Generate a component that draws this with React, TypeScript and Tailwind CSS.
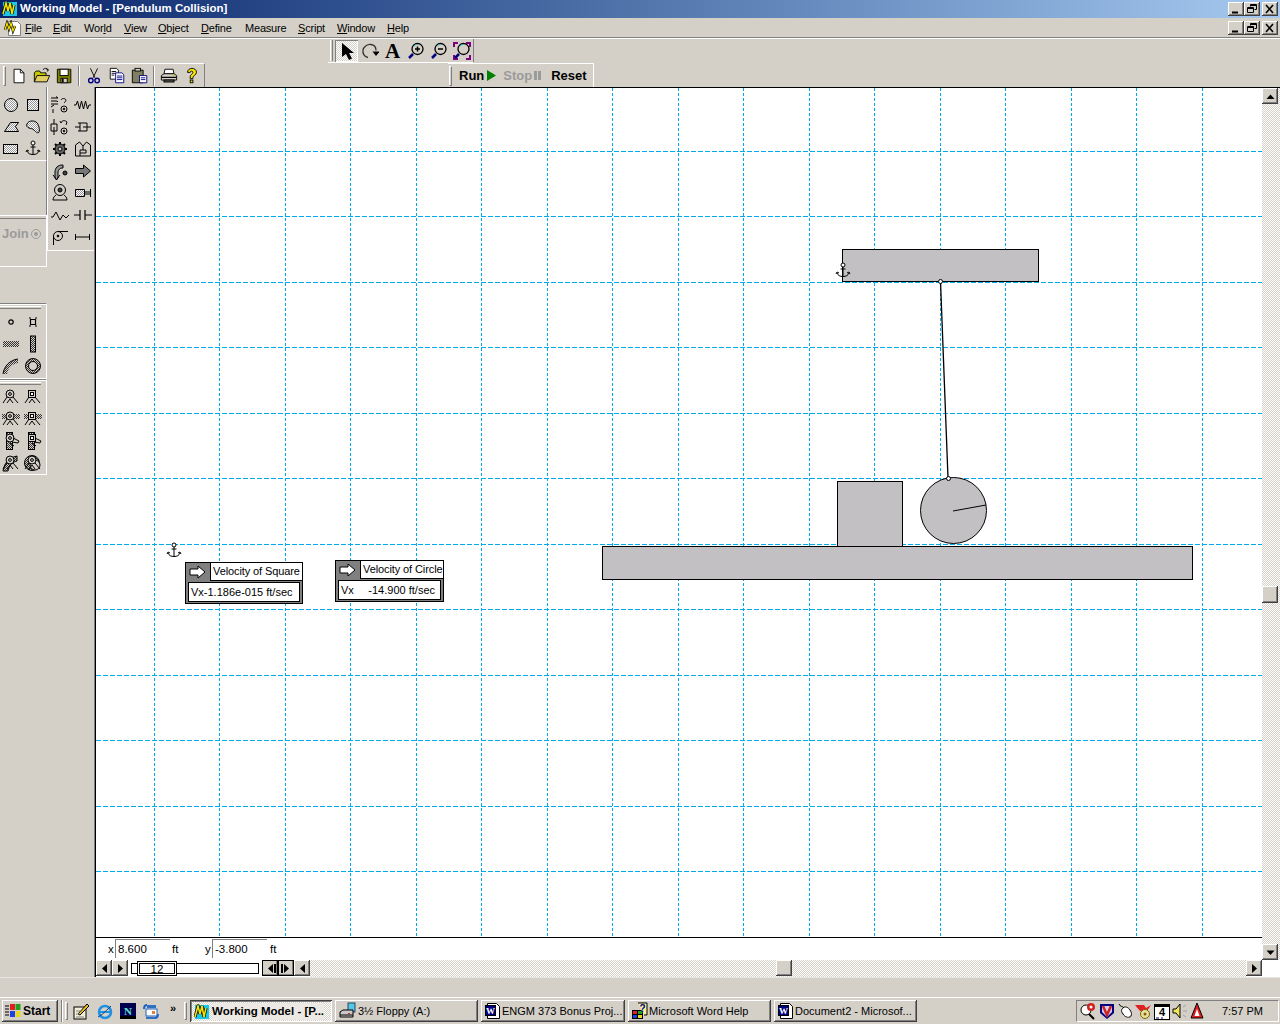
import type { ReactNode } from 'react';

const raised = 'bg-[#d4d0c8] shadow-[inset_-1px_-1px_#404040,inset_1px_1px_#fff,inset_-2px_-2px_#808080,inset_2px_2px_#d4d0c8]';
const stipple = 'bg-[repeating-conic-gradient(#d4d0c8_0_25%,#fff_0_50%)] bg-[length:2px_2px]';
const ST = 'url(#st)';
const ST2 = 'url(#st2)';

const Ico = ({ children, size = 20 }: { children: ReactNode; size?: number }) => (
    <svg width={size} height={size} viewBox="0 0 20 20" fill="none" stroke="#000" strokeWidth="1" className="block">
        {children}
    </svg>
);

const AnchorShape = () => (
    <>
        <circle cx="10" cy="4" r="2" fill="#fff" />
        <path d="M10 6v9M7.500 8h5M4 12c1 2.500 3 3.500 6 3.500s5-1 6-3.500M3 13l1-2 2 1M17 13l-1-2-2 1" />
    </>
);

// simulation toolbar icons
const icons = {
    circle: <circle cx="10" cy="10" r="6.500" fill={ST} />,
    square: <rect x="4.500" y="4.500" width="11" height="11" fill={ST} />,
    poly: <path d="M3.500 14.500 9.500 5.500h8l-3 4 3 5z" fill={ST} />,
    blob: <path d="M4 7c1-3 6-4 9-2s4 8 3 10-3 0-5-2-3-1-5-2-3-2-2-4z" fill={ST} />,
    rect: <rect x="2.500" y="5.500" width="14" height="9" fill={ST} />,
    anchor: <AnchorShape />,
    rotSpring: (
        <>
            <path d="M1 3h7l-2-1.500M1 6h6M1 9h7M1 12l3-2M3 14v4M7 6l1 1" />
            <path d="M11 5c1-2 4-2 5 0 0 1-1 2-2 3" />
            <circle cx="14" cy="14" r="3" />
            <circle cx="14" cy="14" r=".8" fill="#000" />
        </>
    ),
    spring: <path d="M1 10h2l1.500-4 2 8 2-8 2 8 2-8 2 8 1.500-4h2" />,
    rotDamper: (
        <>
            <path d="M4 2v5M1 7h6M1 7v7h6V7M4 10v8" />
            <path d="M11 6c1-3 4-3 6-1l-1 3M11 6l-1-2" />
            <circle cx="14" cy="14" r="3" />
            <circle cx="14" cy="14" r=".8" fill="#000" />
        </>
    ),
    damper: <path d="M2 10h5M7 6v8M5 6h9v8H5M10 10h8" />,
    gear: (
        <>
            <path d="M10 3v14M3 10h14M5 5l10 10M15 5 5 15" strokeWidth="2" />
            <circle cx="10" cy="10" r="5" fill="#666" stroke="#000" />
            <circle cx="10" cy="10" r="2" fill="#d4d0c8" />
        </>
    ),
    house: <path d="M2.500 17V6l4-3 3.500 4 3.500-4 4 3v11H7v-6h6v3H7M2.500 17H7M10 11V7" />,
    curved: (
        <>
            <path d="M5 17V11c0-4 3-7 7-7h1v3h-1c-2 0-4 2-4 4v6l-1.500 2z" fill="#999" />
            <path d="M3 14l3.500 4.500 3.500-4.500" />
            <circle cx="15" cy="12" r="2" fill="#444" />
        </>
    ),
    arrow: <path d="M2.500 7.500h8V4l7 6-7 6v-3.500h-8z" fill="#777" />,
    motor: (
        <>
            <circle cx="10" cy="7" r="5.500" />
            <circle cx="10" cy="7" r="2" fill="#444" />
            <path d="M6 12c-1 1-3 2-3 5h14c0-3-2-4-3-5" />
        </>
    ),
    actuator: <path d="M2.500 6.500h9v7h-9zM11.500 9h6M11.500 11h6M17.500 6v8" fill={ST} />,
    wave: <path d="M1 12h2l3-5 4 8 3-5 3 3 3-3" />,
    plates: <path d="M1 10h6M7 5v10M12 5v10M12 10h7" strokeWidth="1.200" />,
    pulley: (
        <>
            <circle cx="8" cy="9" r="4.500" />
            <circle cx="8" cy="9" r=".9" fill="#000" />
            <path d="M8 4.500h10M3.500 9v9" />
        </>
    ),
    rod: <path d="M2.500 7v6M2.500 10h14M16.500 7v6" />,
    point: <circle cx="10" cy="10" r="2.200" strokeWidth="1.200" />,
    pointSq: <path d="M7.500 7.500h5v5h-5zM6 6h2M12 6h2M6 14h2M12 14h2" strokeWidth="1.200" />,
    hBar: <rect x="2" y="7" width="16" height="6" fill={ST2} stroke="none" />,
    vBar: <rect x="7.500" y="2" width="5" height="16" fill={ST2} />,
    arc: (
        <>
            <path d="M2 18C3 10 9 4 17 3v4C11 8 7 12 6 18z" fill={ST2} stroke="none" />
            <path d="M2 18C3 10 9 4 17 3" />
        </>
    ),
    ring: (
        <>
            <circle cx="10" cy="10" r="7.500" fill={ST2} />
            <circle cx="10" cy="10" r="4.500" fill="#d4d0c8" />
        </>
    ),
};

// joint glyphs used in the bottom two toolbar groups
const Joint = ({ sq, band }: { sq?: boolean; band?: 'h' | 'v' | 'c' | 'r' }) => (
    <Ico>
        {band === 'h' && <path d="M1 5h18v5H1z" fill={ST2} stroke="none" />}
        {band === 'v' && <rect x="5.500" y="1.500" width="6" height="17" fill={ST2} />}
        {band === 'c' && <path d="M2 18C3 11 7 5 16 3v5c-5 1-8 5-9 10z" fill={ST2} stroke="#000" />}
        {band === 'r' && (
            <>
                <circle cx="9" cy="10" r="7.500" fill={ST2} />
                <circle cx="12" cy="12" r="5" fill="#d4d0c8" />
            </>
        )}
        {sq ? <rect x="5.500" y="3.500" width="7" height="7" fill="#d4d0c8" /> : <circle cx="9" cy="7" r="4" fill="#d4d0c8" />}
        {sq ? <rect x="7.500" y="5.500" width="3" height="3" fill="#fff" /> : <circle cx="9" cy="7" r="1.400" />}
        {band === 'v' ? <path d="M12 7l6 3-1 2-6-1M9 12l4 3" /> : <path d="M6 10l-4 6M12 10l5 6M9 12l-3 4M9 12l3 4" />}
    </Ico>
);

const Cell = ({ children }: { children: ReactNode }) => (
    <div className="h-[22px] flex items-center justify-center">{children}</div>
);

const Grip = () => (
    <div className="h-[6px] border-t border-white shadow-[0_-1px_#808080] flex items-center pr-[5px]">
        <div className="h-[3px] w-full bg-[#d4d0c8] border-t border-white border-b border-b-[#808080]" />
    </div>
);

const LeftPanel = () => {
    const col2: (keyof typeof icons)[] = [
        'rotSpring', 'spring', 'rotDamper', 'damper', 'gear', 'house', 'curved',
        'arrow', 'motor', 'actuator', 'wave', 'plates', 'pulley', 'rod',
    ];
    return (
        <div className="w-[95px] flex shrink-0">
            <div className="w-[47px] flex flex-col">
                <div className="h-[74px] pt-[7px] border-b border-b-white border-r border-r-[#808080] grid grid-cols-[21px_24px] content-start">
                    {(['circle', 'square', 'poly', 'blob', 'rect', 'anchor'] as const).map((k) => (
                        <Cell key={k}><Ico>{icons[k]}</Ico></Cell>
                    ))}
                </div>
                <div className="h-[54px] border-r border-r-[#808080]" />
                <div className="h-[52px] border-t border-t-white border-b border-b-white border-r border-r-white">
                    <div className="h-[3px] border-b border-b-[#808080]" />
                    <div className="pt-[7px] pl-[2px] flex items-center font-bold text-[13px] text-[#9a9a9a] leading-[16px]">
                        Join
                        <svg width="12" height="12" viewBox="0 0 12 12" className="ml-[1px]">
                            <circle cx="6" cy="6" r="4.500" fill="none" stroke="#9a9a9a" />
                            <circle cx="6" cy="6" r="2" fill="#9a9a9a" />
                        </svg>
                    </div>
                </div>
                <div className="h-[37px]" />
                <div className="h-[75px] border-r border-r-white border-b border-b-white">
                    <Grip />
                    <div className="grid grid-cols-[21px_24px] pt-[1px]">
                        {(['point', 'pointSq', 'hBar', 'vBar', 'arc', 'ring'] as const).map((k) => (
                            <Cell key={k}><Ico>{icons[k]}</Ico></Cell>
                        ))}
                    </div>
                </div>
                <div className="h-[95px] mt-[1px] border-r border-r-white border-b border-b-white">
                    <Grip />
                    <div className="grid grid-cols-[21px_24px]">
                        <Cell><Joint /></Cell>
                        <Cell><Joint sq /></Cell>
                        <Cell><Joint band="h" /></Cell>
                        <Cell><Joint sq band="h" /></Cell>
                        <Cell><Joint band="v" /></Cell>
                        <Cell><Joint sq band="v" /></Cell>
                        <Cell><Joint band="c" /></Cell>
                        <Cell><Joint band="r" /></Cell>
                    </div>
                </div>
            </div>
            <div className="w-[48px] h-[164px] pt-[7px] border-l border-l-white border-b border-b-white grid grid-cols-[23px_23px] content-start">
                {col2.map((k) => (
                    <Cell key={k}><Ico>{icons[k]}</Ico></Cell>
                ))}
            </div>
        </div>
    );
};

const Tri = ({ dir, bar }: { dir: 'l' | 'r' | 'u' | 'd'; bar?: boolean }) => {
    const shape = {
        l: 'M10 3v9L5 7.500z',
        r: 'M5 3v9l5-4.500z',
        u: 'M3.500 10h8L7.500 5.500z',
        d: 'M3.500 5.500h8L7.500 10z',
    }[dir];
    return (
        <svg width="15" height="15" viewBox="0 0 15 15" className="block">
            <path d={shape} fill="#000" />
            {bar && <rect x={dir === 'l' ? 11 : 2} y="3" width="2" height="9" fill="#000" />}
        </svg>
    );
};

const SmallBtn = ({ dir, bar, boxed }: { dir: 'l' | 'r' | 'u' | 'd'; bar?: boolean; boxed?: boolean }) => (
    <div className={`w-[16px] h-[16px] shrink-0 flex items-center justify-center ${raised} ${boxed ? 'outline outline-1 outline-black -outline-offset-1' : ''}`}>
        <Tri dir={dir} bar={bar} />
    </div>
);

const WinBtn = ({ kind }: { kind: 'min' | 'restore' | 'close' }) => (
    <div className={`w-[16px] h-[14px] flex items-center justify-center ${raised}`}>
        <svg width="12" height="10" viewBox="0 0 12 10" fill="none" stroke="#000">
            {kind === 'min' && <path d="M2 8.500h6" strokeWidth="2" />}
            {kind === 'restore' && <path d="M4.500 2.500v-2h6v5h-2M1.500 3.500h6v5h-6zM1.500 4.500h6M4.500 1.500h6" />}
            {kind === 'close' && <path d="M2 1l7 8M9 1 2 9" strokeWidth="1.600" />}
        </svg>
    </div>
);

const WinControls = () => (
    <div className="flex">
        <WinBtn kind="min" />
        <WinBtn kind="restore" />
        <div className="w-[2px]" />
        <WinBtn kind="close" />
    </div>
);

const Logo = ({ size = 16 }: { size?: number }) => (
    <svg width={size} height={size} viewBox="0 0 16 16" className="block shrink-0">
        <rect x="1" y="1" width="14" height="14" fill="#19c8e8" />
        <path d="M1 13 4 2l2 8 2-8 2 11 2-9" fill="none" stroke="#000" strokeWidth="3" />
        <path d="M1 13 4 2l2 8 2-8 2 11 2-9" fill="none" stroke="#f5e400" strokeWidth="1.600" />
    </svg>
);

const menus = [
    { key: 'File', cls: 'w-[28px]', u: 'F', rest: 'ile' },
    { key: 'Edit', cls: 'w-[31px]', u: 'E', rest: 'dit' },
    { key: 'World', cls: 'w-[40px]', pre: 'Wor', u: 'l', rest: 'd' },
    { key: 'View', cls: 'w-[34px]', u: 'V', rest: 'iew' },
    { key: 'Object', cls: 'w-[43px]', u: 'O', rest: 'bject' },
    { key: 'Define', cls: 'w-[44px]', u: 'D', rest: 'efine' },
    { key: 'Measure', cls: 'w-[53px]', rest: 'Measure' },
    { key: 'Script', cls: 'w-[39px]', u: 'S', rest: 'cript' },
    { key: 'Window', cls: 'w-[50px]', u: 'W', rest: 'indow' },
    { key: 'Help', cls: 'w-[30px]', u: 'H', rest: 'elp' },
];

const StdIcons = {
    page: (
        <Ico size={18}><path d="M4.500 2.500h7l4 4v11h-11z" fill="#fff" /><path d="M11.500 2.500v4h4" /></Ico>
    ),
    open: (
        <Ico size={18}>
            <path d="M1.500 16.500v-10l2-2h4l1 2h6v3" fill="#c8c800" />
            <path d="M1.500 16.500l3-7h14l-3 7z" fill="#e4d060" />
            <path d="M11 3c2-2 4-2 6 0l-1 2M17 3h-2" stroke="#000" />
        </Ico>
    ),
    save: (
        <Ico size={18}>
            <path d="M1.500 2.500h15v15h-15z" fill="#808000" />
            <rect x="4.500" y="2.500" width="9" height="7" fill="#fff" />
            <rect x="5.500" y="12.500" width="7" height="5" fill="#d4d0c8" />
            <rect x="6.500" y="13" width="2" height="4" fill="#000" stroke="none" />
        </Ico>
    ),
    cut: (
        <Ico size={18}>
            <path d="M6 1.500 11 12M14 1.500 9 12" />
            <circle cx="6.500" cy="15" r="2.500" stroke="#000080" strokeWidth="1.500" />
            <circle cx="13.500" cy="15" r="2.500" stroke="#000080" strokeWidth="1.500" />
        </Ico>
    ),
    copy: (
        <Ico size={18}>
            <path d="M2.500 1.500h7l2 2v10h-9z" fill="#fff" />
            <path d="M4 5h5M4 7h5M4 9h3" />
            <path d="M8.500 6.500h7l2 2v9h-9z" fill="#fff" stroke="#000080" />
            <path d="M10 10h6M10 12h6M10 14h6" stroke="#000080" />
        </Ico>
    ),
    paste: (
        <Ico size={18}>
            <path d="M1.500 3.500h12v14h-12z" fill="#808060" />
            <rect x="4.500" y="1.500" width="6" height="3" fill="#d4d0c8" />
            <path d="M9.500 9.500h8v8h-8z" fill="#fff" stroke="#000080" />
            <path d="M11 12h5M11 14h5" stroke="#000080" />
        </Ico>
    ),
    print: (
        <Ico size={18}>
            <path d="M5.500 2.500h9l1 5h-11z" fill="#fff" />
            <path d="M1.500 9.500l3-2h11l3 2v5h-17z" fill="#d4d0c8" />
            <path d="M1.500 11.500h17M4.500 14.500h11v2h-11z" strokeWidth="1.200" />
            <path d="M14 9h3" stroke="#c8c800" />
        </Ico>
    ),
    help: (
        <Ico size={18}>
            <path d="M5 6c0-6 10-6 10 0 0 3-4 3-4 6v1H8v-2c0-3 3-3 3-5s-3-2-3 0z" fill="#f5e400" />
            <rect x="8" y="14.500" width="3" height="3" fill="#f5e400" />
        </Ico>
    ),
};

const Tb = ({ children }: { children: ReactNode }) => (
    <div className="w-[23px] shrink-0 flex justify-center">{children}</div>
);

const Sep = () => <div className="w-[2px] h-[20px] mx-[2px] shrink-0 border-l border-l-[#808080] border-r border-r-white" />;

const TopGrip = () => <div className="w-[3px] h-[20px] shrink-0 border-l border-l-white border-r border-r-[#808080] border-t border-t-white border-b border-b-[#808080]" />;

const ToolBars = () => (
    <div className="h-[48px] shrink-0 flex flex-col">
        <div className="h-[24px] flex pl-[328px]">
            <div className="w-[146px] h-[24px] pl-[2px] flex items-center border-r border-r-[#808080] border-b border-b-white">
                <div className="w-[3px] h-[21px] border-l border-l-white border-r border-r-[#808080]" />
                <div className={`w-[23px] h-[22px] ml-[2px] flex items-center justify-center ${stipple} shadow-[inset_1px_1px_#808080,inset_-1px_-1px_#fff]`}>
                    <svg width="14" height="18" viewBox="0 0 14 18"><path d="M2 1v14l4-3 3 6 3-1.500-3-5.500h5z" fill="#000" /></svg>
                </div>
                <div className="w-[23px] flex justify-center">
                    <svg width="18" height="18" viewBox="0 0 18 18" fill="none" stroke="#333">
                        <path d="M7 15.500C3 15 1.500 11 2 8s4-6 8-5.500 5 4 5 6" strokeWidth="1.300" />
                        <path d="M11.500 9.500h7L15 14z" fill="#000" stroke="none" />
                    </svg>
                </div>
                <div className="w-[23px] text-center font-['Liberation_Serif',serif] font-bold text-[21px] leading-[22px]">A</div>
                {['+', '-', ''].map((s, i) => (
                    <div key={i} className="w-[23px] flex justify-center">
                        <svg width="18" height="18" viewBox="0 0 18 18" fill="none">
                            {s === '' && <path d="M1 5V1h4M13 1h4v4M1 13v4h4M17 13v4h-4" stroke="#800080" strokeWidth="2" />}
                            <path d="M2 16 6 12" stroke="#000080" strokeWidth="2.500" />
                            <circle cx="10.500" cy="7" r="5.500" stroke="#000" strokeWidth="1.300" fill={s === '' ? 'none' : '#d4d0c8'} />
                            <path d="M7 4c1-1 2-1.500 3-1.500" stroke="#00c8e0" />
                            {s !== '' && <path d="M8 7h5" stroke="#000" strokeWidth="1.500" />}
                            {s === '+' && <path d="M10.500 4.500v5" stroke="#000" strokeWidth="1.500" />}
                        </svg>
                    </div>
                ))}
            </div>
        </div>
        <div className="h-[24px] flex">
            <div className="w-[205px] h-[24px] pl-[3px] flex items-center border-t border-t-white border-r border-r-[#808080]">
                <TopGrip />
                <div className="w-[1px] shrink-0" />
                <Tb>{StdIcons.page}</Tb>
                <Tb>{StdIcons.open}</Tb>
                <Tb>{StdIcons.save}</Tb>
                <Sep />
                <Tb>{StdIcons.cut}</Tb>
                <Tb>{StdIcons.copy}</Tb>
                <Tb>{StdIcons.paste}</Tb>
                <Sep />
                <Tb>{StdIcons.print}</Tb>
                <Tb>{StdIcons.help}</Tb>
            </div>
            <div className="w-[146px] h-[24px] ml-[243px] pl-[1px] flex items-center border-t border-t-white border-r border-r-white font-bold text-[13px]">
                <TopGrip />
                <span className="ml-[7px]">Run</span>
                <svg width="9" height="11" viewBox="0 0 9 11" className="ml-[3px]"><path d="M0 0v11l9-5.500z" fill="#008000" /></svg>
                <span className="ml-[7px] text-[#9a9a9a]">Stop</span>
                <div className="ml-[2px] w-[3px] h-[9px] bg-[#9a9a9a]" />
                <div className="ml-[1px] w-[3px] h-[9px] bg-[#9a9a9a]" />
                <span className="ml-[10px]">Reset</span>
            </div>
        </div>
    </div>
);

const GRID_X = [154, 219, 285, 350, 416, 481, 547, 612, 678, 743, 809, 874, 940, 1005, 1071, 1136, 1202];
const GRID_Y = [151, 216, 282, 347, 413, 478, 544, 609, 675, 740, 806, 871];
const BODY = '#c3c0c3';

const Scene = () => (
    <svg width="1166" height="849" viewBox="96 88 1166 849" className="absolute inset-0" fill="none" stroke="#000">
        <g stroke="#00aaee" shapeRendering="crispEdges">
            {GRID_X.map((x) => <line key={x} x1={x + 0.5} y1="88" x2={x + 0.5} y2="937" strokeDasharray="3 2" />)}
            {GRID_Y.map((y) => <line key={y} x1="96" y1={y + 0.5} x2="1262" y2={y + 0.5} strokeDasharray="5 2" />)}
        </g>
        <rect x="842.500" y="249.500" width="196" height="32" fill={BODY} shapeRendering="crispEdges" />
        <rect x="837.500" y="481.500" width="65" height="66" fill={BODY} shapeRendering="crispEdges" />
        <rect x="602.500" y="546.500" width="590" height="33" fill={BODY} shapeRendering="crispEdges" />
        <circle cx="953.500" cy="510.500" r="33" fill={BODY} />
        <path d="M953 511 986 505" />
        <path d="M940.500 281.500 948 478" strokeWidth="1.300" />
        <circle cx="940.500" cy="281.500" r="2" fill="#fff" />
        <circle cx="948.500" cy="478.500" r="2" fill="#fff" />
        <svg x="833" y="261" width="20" height="20" viewBox="0 0 20 20"><AnchorShape /></svg>
        <svg x="164" y="541" width="20" height="20" viewBox="0 0 20 20"><AnchorShape /></svg>
    </svg>
);

const Meter = ({ title, value, cls, gap }: { title: string; value: string; cls: string; gap: string }) => (
    <div className={`absolute h-[42px] bg-[#808080] border border-black flex flex-col ${cls}`}>
        <div className="h-[18px] flex">
            <div className="w-[24px] flex items-center justify-center">
                <svg width="18" height="14" viewBox="0 0 18 14"><path d="M1 4h8V1l7 6-7 6v-3H1z" fill="#fff" stroke="#000" /></svg>
            </div>
            <div className="flex-1 bg-white border-b border-b-black border-l border-l-black pl-[2px] text-[11px] tracking-[-0.1px] leading-[16px] whitespace-nowrap">{title}</div>
        </div>
        <div className={`h-[20px] mx-[2px] mt-[1px] bg-white border border-black pl-[2px] text-[11px] leading-[18px] whitespace-nowrap flex ${gap}`}>
            <span>Vx</span>
            <span>{value}</span>
        </div>
    </div>
);

const CanvasColumn = () => (
    <div className="flex-1 flex flex-col border-t border-t-black border-l border-l-black shadow-[-1px_0_#808080]">
        <div className="flex-1 flex">
            <div className="flex-1 flex flex-col bg-white">
                <div className="flex-1 relative overflow-hidden">
                    <Scene />
                    <Meter title="Velocity of Square" value="-1.186e-015 ft/sec" cls="left-[89px] top-[474px] w-[118px]" gap="" />
                    <Meter title="Velocity of Circle" value="-14.900 ft/sec" cls="left-[239px] top-[472px] w-[109px]" gap="justify-between pr-[5px]" />
                </div>
                <div className="h-[23px] border-t border-t-black flex items-center text-[11.500px] leading-[18px] pb-[1px]">
                    <span className="ml-[12px] w-[7px]">x</span>
                    <div className="w-[55px] h-[19px] pl-[2px] border-l border-t border-[#808080]">8.600</div>
                    <span className="ml-[2px] w-[33px]">ft</span>
                    <span className="w-[7px]">y</span>
                    <div className="w-[55px] h-[19px] pl-[2px] border-l border-t border-[#808080]">-3.800</div>
                    <span className="ml-[3px]">ft</span>
                </div>
            </div>
            <div className={`w-[18px] flex flex-col ${stipple}`}>
                <SmallBtn dir="u" />
                <div className="h-[482px]" />
                <div className={`w-[16px] h-[17px] ${raised}`} />
                <div className="flex-1" />
                <SmallBtn dir="d" />
            </div>
        </div>
        <div className="h-[17px] flex bg-white">
            <SmallBtn dir="l" />
            <SmallBtn dir="r" />
            <div className="w-[133px] relative ml-[1px] flex items-center">
                <div className="ml-[2px] w-[128px] h-[11px] border border-black bg-white" />
                <div className="absolute left-[8px] top-[1px] w-[40px] h-[15px] border border-black bg-white flex items-center justify-center">
                    <div className="w-[36px] h-[11px] border border-black text-center text-[11.500px] leading-[10px]">12</div>
                </div>
            </div>
            <SmallBtn dir="l" bar boxed />
            <SmallBtn dir="r" bar boxed />
            <SmallBtn dir="l" />
            <div className={`flex-1 flex pl-[466px] ${stipple}`}>
                <div className={`w-[16px] h-[16px] ${raised}`} />
            </div>
            <SmallBtn dir="r" />
            <div className="w-[18px]" />
        </div>
    </div>
);

const WordIcon = () => (
    <svg width="16" height="18" viewBox="0 0 16 18" className="shrink-0">
        <path d="M2.500 1.500h9l3 3v12h-12z" fill="#fff" stroke="#000" />
        <rect x="0.500" y="3.500" width="10" height="10" fill="#000080" stroke="#000" />
        <text x="5.500" y="12" fontSize="9" fontWeight="700" fill="#fff" textAnchor="middle" fontFamily="Liberation Serif">W</text>
    </svg>
);

const TaskBtn = ({ icon, label, cls }: { icon: ReactNode; label: string; cls: string }) => (
    <div className={`h-[22px] flex items-center pl-[4px] pr-[2px] gap-[1px] whitespace-nowrap overflow-hidden ${raised} ${cls}`}>
        {icon}
        <span>{label}</span>
    </div>
);

const TaskGrip = () => <div className="w-[3px] h-[18px] border-l border-l-white border-t border-t-white border-r border-r-[#808080] border-b border-b-[#808080]" />;

const Taskbar = () => (
    <div className="h-[27px] shrink-0 border-t border-t-white pt-[2px] flex items-start">
        <div className={`ml-[2px] w-[56px] h-[22px] flex items-center pl-[3px] gap-[2px] font-bold text-[12px] ${raised}`}>
            <svg width="16" height="16" viewBox="0 0 16 16" className="shrink-0">
                <rect x="5" y="1" width="5" height="6" fill="#e02020" />
                <rect x="10.500" y="1" width="5" height="6" fill="#20a020" />
                <rect x="5" y="8" width="5" height="6" fill="#2040e0" />
                <rect x="10.500" y="8" width="5" height="6" fill="#e8d820" />
                <path d="M0 3h4M0 6h4M0 9h4M0 12h4" stroke="#000" />
            </svg>
            Start
        </div>
        <div className="ml-[3px] w-[2px] h-[22px] border-l border-l-[#808080] border-r border-r-white" />
        <div className="ml-[2px] mt-[2px]"><TaskGrip /></div>
        <div className="ml-[5px] flex items-center w-[97px] gap-[7px] h-[22px]">
            <svg width="17" height="17" viewBox="0 0 17 17" className="shrink-0">
                <rect x="1" y="4" width="12" height="12" fill="#f0f0d8" stroke="#000" />
                <path d="M5 11 14 1l2 2-9 9z" fill="#e8c020" stroke="#000" />
                <path d="M3 8h6M3 11h3M3 14h8" stroke="#808080" />
            </svg>
            <svg width="16" height="17" viewBox="0 0 16 17" className="shrink-0">
                <circle cx="8" cy="9" r="6" fill="none" stroke="#2090e0" strokeWidth="2.500" />
                <path d="M3 9h11" stroke="#2090e0" strokeWidth="2" />
                <path d="M1 14c3-1 10-8 13-11" stroke="#104080" fill="none" />
            </svg>
            <svg width="16" height="16" viewBox="0 0 16 16" className="shrink-0">
                <rect x="0" y="0" width="16" height="16" fill="#000050" />
                <path d="M0 13h16v3H0z" fill="#000" />
                <text x="8" y="12" fontSize="11" fontWeight="700" fill="#60e0d0" textAnchor="middle" fontFamily="Liberation Serif">N</text>
            </svg>
            <svg width="16" height="17" viewBox="0 0 16 17" className="shrink-0">
                <path d="M4 2h9v3H4z" fill="#3070c0" />
                <path d="M1 6c0-2 1-4 3-4M15 11c0 2-1 4-3 4" stroke="#2060c0" strokeWidth="2" fill="none" />
                <rect x="3" y="6" width="11" height="7" fill="#fff" stroke="#2060c0" />
                <path d="M3 14h9v2H3z" fill="#3070c0" />
                <rect x="9" y="8" width="3" height="3" fill="#e08030" />
            </svg>
        </div>
        <span className="w-[10px] mt-[1px] text-[11px] font-bold leading-[14px]">»</span>
        <div className="ml-[4px] mt-[2px]"><TaskGrip /></div>
        <div className={`ml-[3px] w-[142px] h-[22px] flex items-center pl-[4px] pt-[1px] gap-[2px] font-bold text-[11.500px] whitespace-nowrap overflow-hidden shadow-[inset_1px_1px_#404040,inset_-1px_-1px_#fff,inset_2px_2px_#808080] ${stipple}`}>
            <Logo />
            <span className="bg-[#ece9e4]">Working Model - [P...</span>
        </div>
        <div className="ml-[3px] flex gap-[3px]">
            <TaskBtn
                cls="w-[143px]"
                label="3½ Floppy (A:)"
                icon={
                    <svg width="18" height="18" viewBox="0 0 18 18" className="shrink-0">
                        <rect x="9" y="1" width="7" height="9" fill="#50c8e8" stroke="#304060" />
                        <path d="M1 10l3-2h10v7H1z" fill="#c8c8c8" stroke="#000" />
                        <path d="M1 13h13" stroke="#000" />
                        <rect x="9" y="11" width="2" height="1" fill="#e02020" />
                    </svg>
                }
            />
            <TaskBtn cls="w-[144px]" label="ENGM 373 Bonus Proj..." icon={<WordIcon />} />
            <TaskBtn
                cls="w-[143px]"
                label="Microsoft Word Help"
                icon={
                    <svg width="16" height="18" viewBox="0 0 16 18" className="shrink-0">
                        <rect x="0.500" y="8.500" width="5" height="4" fill="#e02020" stroke="#000" />
                        <rect x="5.500" y="8.500" width="5" height="4" fill="#20a020" stroke="#000" />
                        <rect x="0.500" y="12.500" width="5" height="4" fill="#2040e0" stroke="#000" />
                        <rect x="5.500" y="12.500" width="5" height="4" fill="#e8d820" stroke="#000" />
                        <path d="M6 1h9v12h-3" fill="#f5f0a0" stroke="#000" />
                        <text x="10.500" y="10" fontSize="10" fontWeight="700" fill="#000080" textAnchor="middle" fontFamily="Liberation Sans">?</text>
                    </svg>
                }
            />
            <TaskBtn cls="w-[143px]" label="Document2 - Microsof..." icon={<WordIcon />} />
        </div>
        <div className="ml-[159px] w-[203px] h-[22px] pl-[3px] flex items-center shrink-0 border border-t-[#808080] border-l-[#808080] border-r-white border-b-white">
            <div className="flex items-center gap-[2px] w-[132px]">
                <svg width="17" height="18" viewBox="0 0 17 18" className="shrink-0">
                    <circle cx="6" cy="8" r="5" fill="#fff" stroke="#000" />
                    <path d="M9 12l5 5" stroke="#000" strokeWidth="2" />
                    <circle cx="11" cy="5" r="4" fill="#d02020" />
                    <circle cx="11" cy="5" r="1.500" fill="#fff" />
                </svg>
                <svg width="16" height="18" viewBox="0 0 16 18" className="shrink-0">
                    <path d="M1 2h14v9l-7 6-7-6z" fill="#000080" />
                    <path d="M3 4h10v6l-5 5-5-5z" fill="#d0d0f0" />
                    <path d="M4 4l4 9 4-9" stroke="#d02020" strokeWidth="2.500" fill="none" />
                </svg>
                <svg width="16" height="18" viewBox="0 0 16 18" className="shrink-0">
                    <path d="M6 6c2-2 5-1 7 2s2 6 0 7-5 0-7-3-2-4 0-6z" fill="#fff" stroke="#000" />
                    <path d="M7 6C6 4 3 5 2 2" stroke="#000" fill="none" />
                    <path d="M9 15c2 1 4 0 5-2" stroke="#808080" fill="none" />
                </svg>
                <svg width="17" height="18" viewBox="0 0 17 18" className="shrink-0">
                    <path d="M0 3h9l2 3 5-3-4 6H5z" fill="#e02020" />
                    <circle cx="10" cy="12" r="4.500" fill="#e8e0a0" stroke="#806000" />
                    <circle cx="10" cy="12" r="1.500" fill="#806000" />
                </svg>
                <svg width="16" height="17" viewBox="0 0 16 17" className="shrink-0">
                    <rect x="0.500" y="1.500" width="15" height="15" fill="#fff" stroke="#000" />
                    <rect x="0" y="1" width="16" height="3" fill="#000" />
                    <text x="8" y="13" fontSize="11" fontWeight="700" fill="#000" textAnchor="middle" fontFamily="Liberation Sans">4</text>
                    <path d="M2 15h3M7 15h2" stroke="#000080" />
                </svg>
                <svg width="16" height="18" viewBox="0 0 16 18" className="shrink-0">
                    <path d="M1 7h3l4-5v14l-4-5H1z" fill="#f0e860" stroke="#000" />
                    <path d="M11 9h4M11 5l3-2M11 13l3 2" stroke="#a0a0a0" />
                </svg>
                <svg width="14" height="18" viewBox="0 0 14 18" className="shrink-0">
                    <path d="M7 1 1 16h12z" fill="#e02020" stroke="#000" />
                    <path d="M7 7 4.500 14h5z" fill="#fff" />
                </svg>
            </div>
            <span className="ml-[10px]">7:57 PM</span>
        </div>
    </div>
);

export default function App() {
    return (
        <div className="w-[1280px] h-[1024px] overflow-hidden flex flex-col bg-[#d4d0c8] text-black text-[11px] font-['Liberation_Sans',sans-serif]">
            <svg width="0" height="0" className="absolute">
                <defs>
                    <pattern id="st" width="2" height="2" patternUnits="userSpaceOnUse">
                        <rect width="2" height="2" fill="#fff" />
                        <rect width="1" height="1" fill="#999" />
                        <rect x="1" y="1" width="1" height="1" fill="#999" />
                    </pattern>
                    <pattern id="st2" width="2" height="2" patternUnits="userSpaceOnUse">
                        <rect width="2" height="2" fill="#d4d0c8" />
                        <rect width="1" height="1" fill="#333" />
                        <rect x="1" y="1" width="1" height="1" fill="#333" />
                    </pattern>
                </defs>
            </svg>

            {/* Title bar */}
            <div className="h-[18px] shrink-0 flex items-center pl-[2px] pr-[2px] bg-gradient-to-r from-[#0a246a] to-[#a6caf0]">
                <Logo />
                <span className="ml-[2px] flex-1 text-white font-bold text-[11.500px]">Working Model - [Pendulum Collision]</span>
                <WinControls />
            </div>

            {/* Menu */}
            <div className="h-[21px] shrink-0 flex items-center pl-[4px] pr-[2px] border-b border-b-white shadow-[0_-1px_0_#808080_inset] tracking-[-0.2px]">
                <svg width="18" height="17" viewBox="0 0 18 17" className="shrink-0">
                    <path d="M4.500 1.500h9l3 3v11h-12z" fill="#fff" stroke="#808080" />
                    <path d="M1 10 3 3l2 6 2-6 2 8 2-5" fill="none" stroke="#000" strokeWidth="2.400" />
                    <path d="M1 10 3 3l2 6 2-6 2 8 2-5" fill="none" stroke="#f5e400" strokeWidth="1.200" />
                </svg>
                <div className="ml-[3px] flex flex-1">
                    {menus.map((m) => (
                        <span key={m.key} className={m.cls}>
                            {m.pre}
                            {m.u && <u>{m.u}</u>}
                            {m.rest}
                        </span>
                    ))}
                </div>
                <WinControls />
            </div>

            <ToolBars />

            <div className="h-[890px] shrink-0 flex">
                <LeftPanel />
                <CanvasColumn />
            </div>

            <div className="h-[20px] shrink-0 border-t border-t-[#e8e6e0]" />
            <Taskbar />
        </div>
    );
}
